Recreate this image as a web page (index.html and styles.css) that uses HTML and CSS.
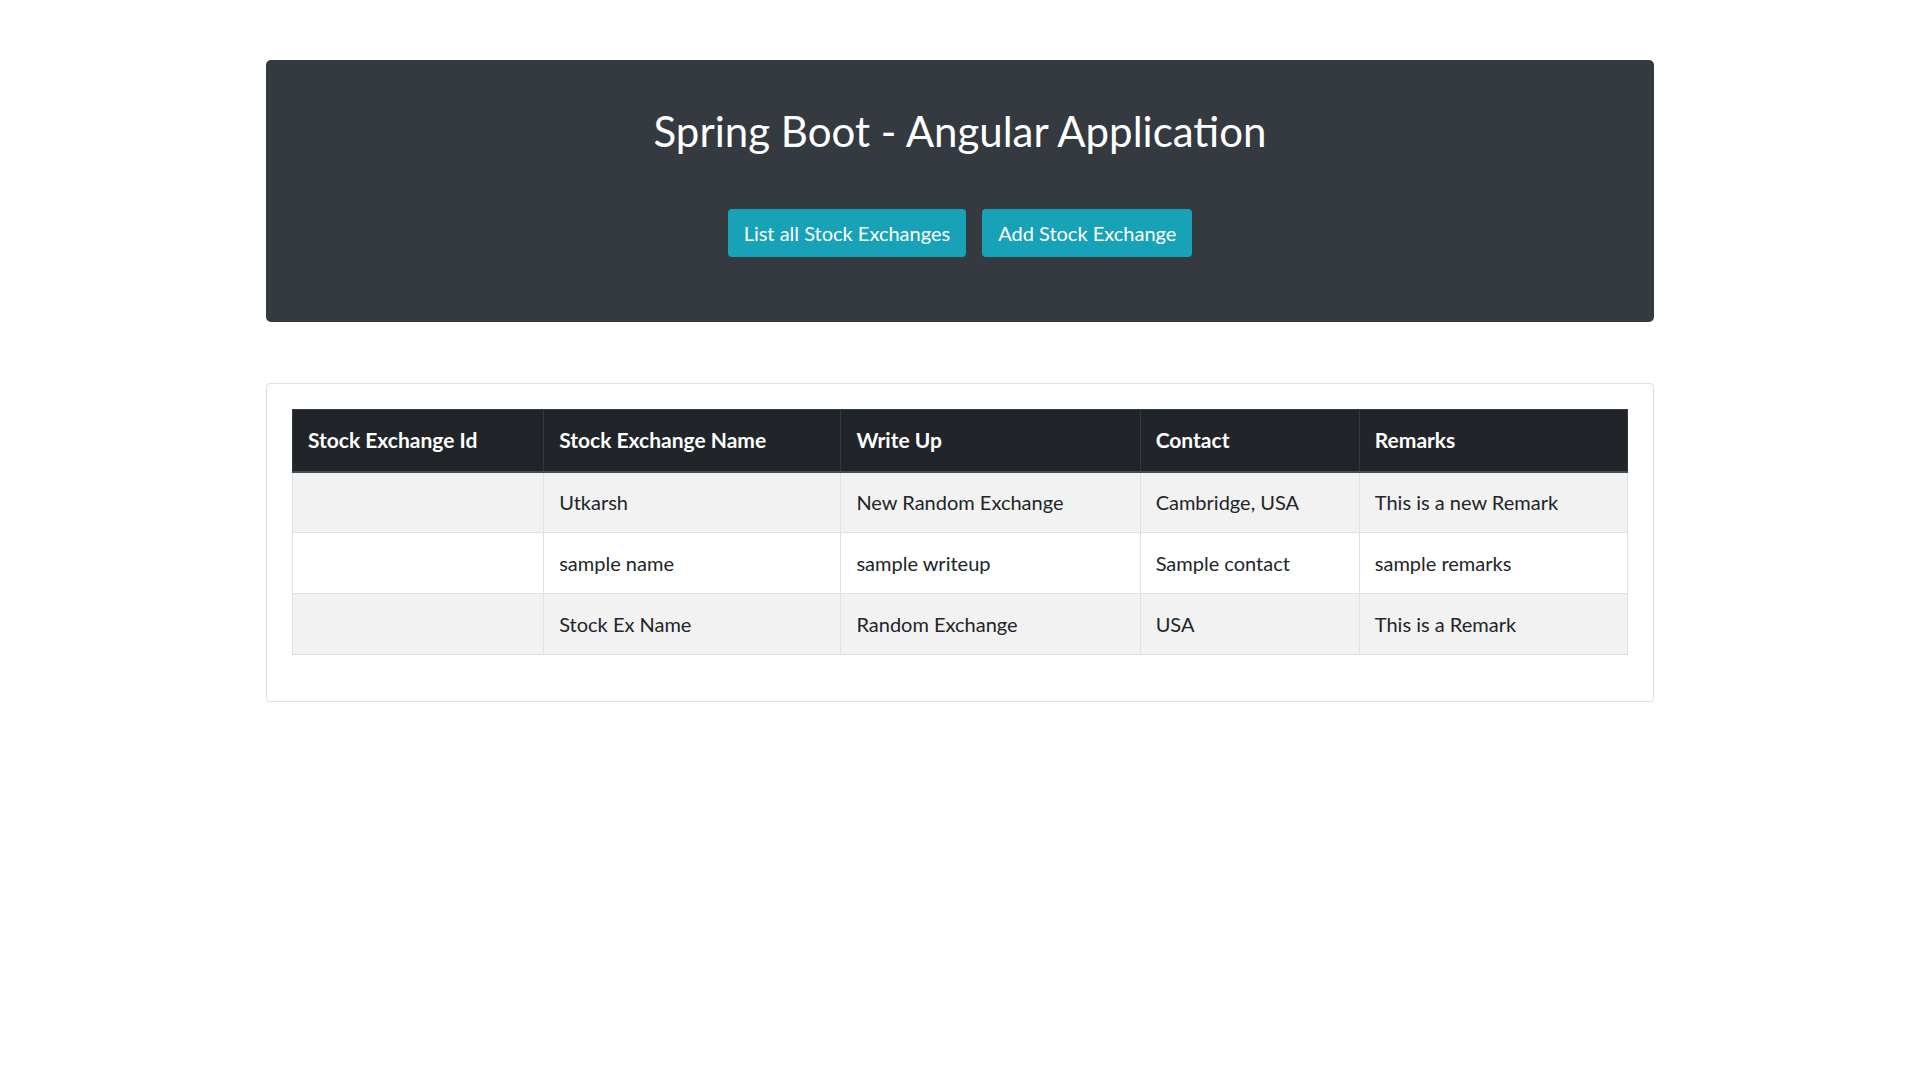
FILE: index.html
```html
<!DOCTYPE html>
<html lang="en">
<head>
<meta charset="utf-8">
<title>Spring Boot - Angular Application</title>
<link rel="stylesheet" href="styles.css">
</head>
<body>
<div class="page">
  <header class="jumbotron">
    <h1 class="title">Spring Boot - Angular Application</h1>
    <div class="actions">
      <a class="btn" href="#">List all Stock Exchanges</a>
      <a class="btn" href="#">Add Stock Exchange</a>
    </div>
  </header>
  <section class="card">
    <table class="table">
      <thead>
        <tr>
          <th class="c-id">Stock Exchange Id</th>
          <th class="c-name">Stock Exchange Name</th>
          <th class="c-write">Write Up</th>
          <th class="c-contact">Contact</th>
          <th class="c-remarks">Remarks</th>
        </tr>
      </thead>
      <tbody>
        <tr>
          <td></td>
          <td>Utkarsh</td>
          <td>New Random Exchange</td>
          <td>Cambridge, USA</td>
          <td>This is a new Remark</td>
        </tr>
        <tr>
          <td></td>
          <td>sample name</td>
          <td>sample writeup</td>
          <td>Sample contact</td>
          <td>sample remarks</td>
        </tr>
        <tr>
          <td></td>
          <td>Stock Ex Name</td>
          <td>Random Exchange</td>
          <td>USA</td>
          <td>This is a Remark</td>
        </tr>
      </tbody>
    </table>
  </section>
</div>
</body>
</html>
```
FILE: styles.css
```css
* { box-sizing: border-box; }
html, body {
  margin: 0;
  padding: 0;
  background: #ffffff;
}
body {
  font-family: Lato, "Open Sans", "Noto Sans", sans-serif;
  color: #212529;
  font-size: 16px;
}
.page {
  width: 1388px;
  margin: 0 auto;
  padding-top: 60px;
}
.jumbotron {
  background: #343a40;
  border-radius: 5px;
  padding: 47px 32px 65px;
  text-align: center;
}
.title {
  margin: 0 0 54px;
  font-size: 42px;
  line-height: 48px;
  font-weight: 400;
  color: #ffffff;
}
.actions {
  display: flex;
  justify-content: center;
  gap: 16px;
}
.btn {
  display: inline-block;
  background: #17a2b8;
  color: #ffffff;
  text-decoration: none;
  font-size: 20px;
  line-height: 30px;
  padding: 9px 16px;
  border-radius: 4px;
}
.card {
  margin-top: 61px;
  border: 1px solid #dfdfdf;
  border-radius: 4px;
  padding: 25px 25px 25px;
}
.table {
  width: 100%;
  border-collapse: collapse;
  table-layout: fixed;
  margin-bottom: 21px;
  font-size: 20px;
}
.table th,
.table td {
  text-align: left;
  padding: 0 15px;
  height: 61px;
  border: 1px solid #dee2e6;
  vertical-align: middle;
  line-height: 28px;
}
.table th {
  background: #212529;
  color: #ffffff;
  font-size: 21px;
  font-weight: 700;
  border-color: #32383e;
  border-bottom: 2px solid #454d55;
  height: 62px;
}
.table tbody tr:nth-child(odd) td {
  background: #f2f2f2;
}
.c-id { width: 251px; }
.c-name { width: 297px; }
.c-write { width: 299px; }
.c-contact { width: 219px; }
.c-remarks { width: 268px; }
```
